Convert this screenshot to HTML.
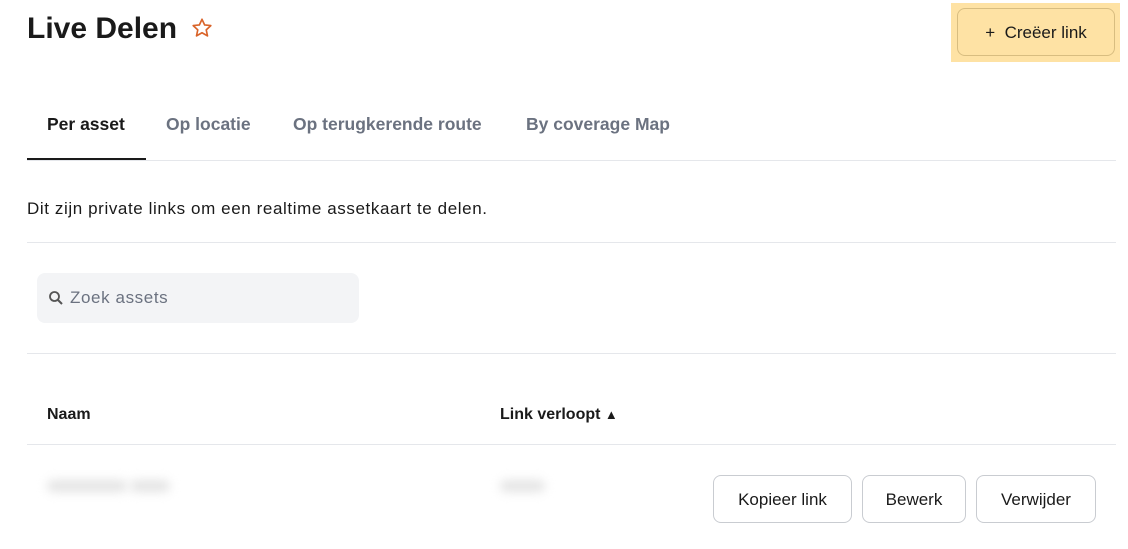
<!DOCTYPE html>
<html><head><style>
body{margin:0;width:1128px;height:549px;background:#fff;font-family:"Liberation Sans",sans-serif;color:#1a1a1a;position:relative;overflow:hidden}
.a{position:absolute}
.line{position:absolute;left:27px;width:1089px;height:1px;background:#e5e7eb}
.btn{position:absolute;top:475px;height:48px;border:1px solid #c9ccd1;border-radius:8px;background:#fff;font-size:17px;line-height:48px;text-align:center;box-sizing:border-box}
.blur{position:absolute;height:12px;background:#e4e4e4;border-radius:6px;filter:blur(5px)}
</style></head><body>
<div class="a" style="left:27px;top:12px;font-size:30px;font-weight:bold">Live Delen</div>
<svg class="a" style="left:191px;top:17px" width="22" height="22" viewBox="0 0 24 24"><path d="M12 2.5l2.9 6.2 6.7.7-5 4.6 1.4 6.6L12 17.2 6 20.6l1.4-6.6-5-4.6 6.7-.7z" fill="none" stroke="#d9642a" stroke-width="1.8" stroke-linejoin="round"/></svg>
<div class="a" style="left:951px;top:3px;width:169px;height:59px;background:#fee2a4"></div>
<div class="a" style="left:957px;top:8px;width:158px;height:48px;border:1px solid #d8bd80;border-radius:8px;box-sizing:border-box;font-size:17px;line-height:48px;text-align:center">+&nbsp; Creëer link</div>
<div class="a" style="left:47px;top:114px;font-size:17.5px;font-weight:bold">Per asset</div>
<div class="a" style="left:166px;top:114px;font-size:17.5px;font-weight:bold;color:#6b7280">Op locatie</div>
<div class="a" style="left:293px;top:114px;font-size:17.5px;font-weight:bold;color:#6b7280">Op terugkerende route</div>
<div class="a" style="left:526px;top:114px;font-size:17.5px;font-weight:bold;color:#6b7280">By coverage Map</div>
<div class="line" style="top:160px"></div>
<div class="a" style="left:27px;top:158px;width:119px;height:2px;background:#1a1a1a"></div>
<div class="a" style="left:27px;top:199px;font-size:17px;letter-spacing:0.6px">Dit zijn private links om een realtime assetkaart te delen.</div>
<div class="line" style="top:242px"></div>
<div class="a" style="left:37px;top:273px;width:322px;height:50px;background:#f3f4f6;border-radius:8px"></div>
<svg class="a" style="left:48px;top:290px" width="16" height="16" viewBox="0 0 16 16"><circle cx="6.5" cy="6.5" r="4.5" fill="none" stroke="#555" stroke-width="1.8"/><path d="M10 10l4 4" stroke="#555" stroke-width="2"/></svg>
<div class="a" style="left:70px;top:288px;font-size:17px;color:#6b7280;letter-spacing:0.6px">Zoek assets</div>
<div class="line" style="top:353px"></div>
<div class="a" style="left:47px;top:406px;font-size:16px;font-weight:bold">Naam</div>
<div class="a" style="left:500px;top:406px;font-size:16px;font-weight:bold">Link verloopt <span style="font-size:13px">▲</span></div>
<div class="line" style="top:444px"></div>
<div class="blur" style="left:47px;top:480px;width:80px"></div>
<div class="blur" style="left:130px;top:480px;width:40px"></div>
<div class="blur" style="left:500px;top:480px;width:45px"></div>
<div class="btn" style="left:713px;width:139px">Kopieer link</div>
<div class="btn" style="left:862px;width:104px">Bewerk</div>
<div class="btn" style="left:976px;width:120px">Verwijder</div>
</body></html>
